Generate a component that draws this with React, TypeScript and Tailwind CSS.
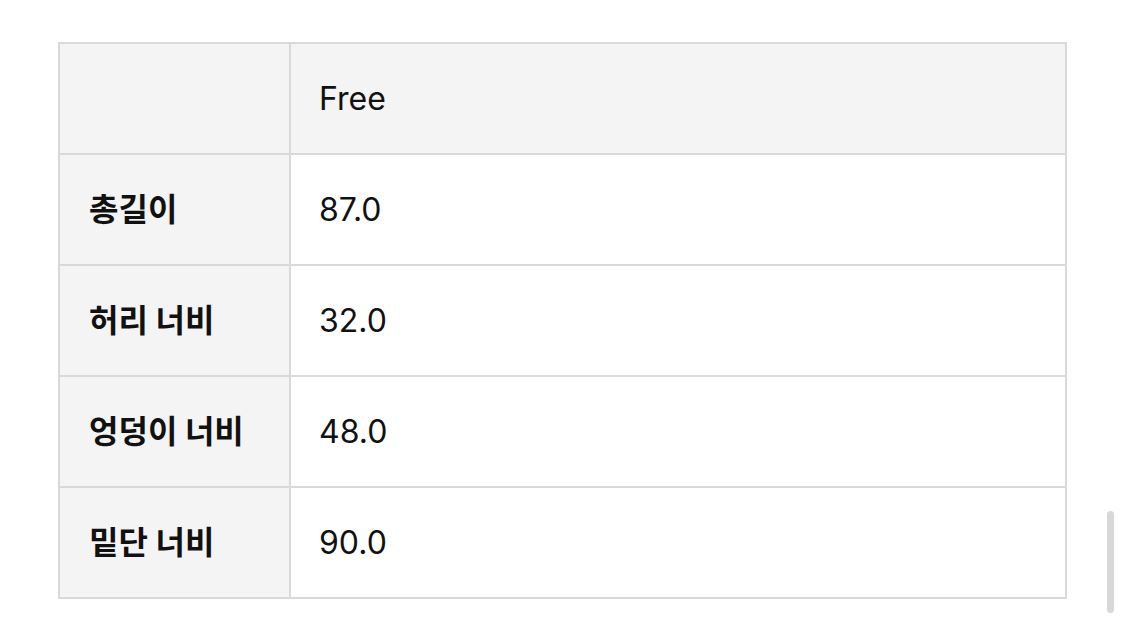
import React from 'react';

const rows = [
  { label: '총길이', value: '87.0' },
  { label: '허리 너비', value: '32.0' },
  { label: '엉덩이 너비', value: '48.0' },
  { label: '밑단 너비', value: '90.0' },
];

const font = { fontFamily: 'Inter, "Noto Sans CJK KR", sans-serif' };

const App: React.FC = () => {
  return (
    <div className="relative w-[1125px] h-[643px] bg-white overflow-hidden" style={font}>
      <div className="pt-[42px] pl-[58px]">
        <div className="grid grid-cols-[231px_776px] border-l-2 border-t-2 border-[#d9d9d9] w-[1009px] text-[32px] text-[#111]">
          <div className="h-[111px] bg-[#f4f4f4] border-r-2 border-b-2 border-[#d9d9d9]"></div>
          <div className="h-[111px] bg-[#f4f4f4] border-r-2 border-b-2 border-[#d9d9d9] flex items-center pl-[28px]">
            Free
          </div>
          {rows.map((row) => (
            <React.Fragment key={row.label}>
              <div className="h-[111px] bg-[#f4f4f4] border-r-2 border-b-2 border-[#d9d9d9] flex items-center pl-[29px] font-bold">
                {row.label}
              </div>
              <div className="h-[111px] bg-white border-r-2 border-b-2 border-[#d9d9d9] flex items-center pl-[28px]">
                {row.value}
              </div>
            </React.Fragment>
          ))}
        </div>
      </div>
      {/* scrollbar */}
      <div className="absolute left-[1107px] top-[511px] w-[7px] h-[102px] rounded-full bg-[#d8d8d8]"></div>
    </div>
  );
};

export default App;
